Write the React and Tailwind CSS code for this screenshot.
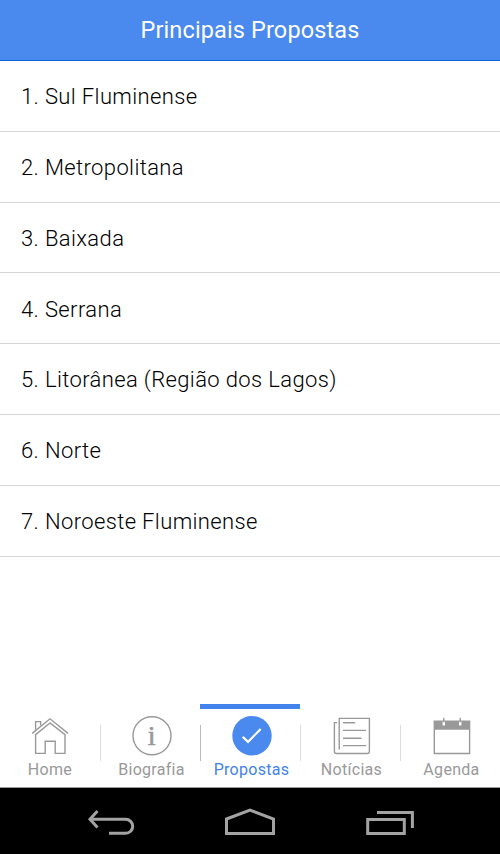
import React from 'react';
import clsx from 'clsx';

const REGIONS = [
    'Sul Fluminense',
    'Metropolitana',
    'Baixada',
    'Serrana',
    'Litorânea (Região dos Lagos)',
    'Norte',
    'Noroeste Fluminense',
];

const Icon = ({ children }) => (
    <svg width="40" height="40" viewBox="0 0 40 40" fill="none" stroke="currentColor" strokeWidth="1.4">
        {children}
    </svg>
);

const HomeIcon = () => (
    <Icon>
        <path d="M2.2 17.4 20 2.8l18 14.6" />
        <path d="M5.6 13.8V5.6h5v4" />
        <path d="M20 7 5.6 18.6v18.8h9.6V25.3h10v12.1h9.8V18.6z" />
    </Icon>
);

const InfoIcon = () => (
    <Icon>
        <circle cx="20" cy="19.7" r="19" />
        <text
            x="19.7"
            y="29"
            textAnchor="middle"
            fontSize="28"
            strokeWidth="0.6"
            fill="currentColor"
            className="font-['Liberation_Serif',serif]"
        >
            i
        </text>
    </Icon>
);

const CheckIcon = () => (
    <Icon>
        <circle cx="20" cy="19.7" r="19.7" fill="#4a89ee" stroke="none" />
        <path d="m10.7 20.7 5.3 5.2L28.7 13" stroke="#fff" strokeWidth="2.2" />
    </Icon>
);

const NewsIcon = () => (
    <Icon>
        <path d="M7.2 33.5V2.4h30.2v32.9q0 2.2-2.2 2.2H4.6q-2.2 0-2.2-2.2V6.6h2.9" />
        <path d="M11 6.8h12.2M11 14.4h23M11 22.2h18.5M11 29.6h23" />
    </Icon>
);

const AgendaIcon = () => (
    <Icon>
        <path d="M2.3 5.3h35.3v32.2H2.3z" />
        <path d="M2.5 5.5h35v8.3h-35z" fill="currentColor" stroke="none" />
        <path d="M11.8 5.6v4M28.2 5.6v4" stroke="#fff" strokeWidth="2.4" />
        <path d="M11.8 1.8v4.4M28.2 1.8v4.4" />
    </Icon>
);

const TABS = [
    { label: 'Home', icon: HomeIcon },
    { label: 'Biografia', icon: InfoIcon },
    { label: 'Propostas', icon: CheckIcon, active: true },
    { label: 'Notícias', icon: NewsIcon },
    { label: 'Agenda', icon: AgendaIcon },
];

const TabBar = () => (
    <nav className="flex h-[84px] border-b border-[#999]">
        {TABS.map(({ label, icon: TabIcon, active }, i) => (
            <div
                key={label}
                className={clsx(
                    'flex w-[100px] flex-col border-t-[5px]',
                    active ? 'border-[#4283ec] text-[#4283ec]' : 'border-transparent text-[#999]'
                )}
            >
                <div className="flex h-full">
                    {i > 0 && (
                        <div className={clsx('mt-4 h-9 w-px', active ? 'bg-[#bbb]' : 'bg-[#ddd]')} />
                    )}
                    <div className={clsx('flex flex-1 flex-col items-center pt-[7px]', i > 0 && 'pl-0.5')}>
                        <TabIcon />
                        <span className="mt-1 text-base leading-5 tracking-[0.3px]">{label}</span>
                    </div>
                </div>
            </div>
        ))}
    </nav>
);

const SystemBar = () => (
    <div className="flex h-[66px] items-center bg-black pl-[86px]">
        <svg width="50" height="32" viewBox="0 0 50 32" fill="none" stroke="#a3a3a3" strokeWidth="3">
            <path d="M3.5 14.3h36.2a7 7 0 0 1 0 14H23" />
            <path d="m11.5 6-7.5 8.3 7.5 8.2" />
        </svg>
        <svg className="ml-[87px]" width="54" height="32" viewBox="0 0 54 32" fill="none" stroke="#a3a3a3" strokeWidth="3">
            <path d="M3.5 14 27 5l23.5 9v14.5h-47z" />
        </svg>
        <svg className="ml-[87px]" width="54" height="32" viewBox="0 0 54 32" fill="none" stroke="#a3a3a3" strokeWidth="3">
            <path d="M3.7 14.4h36.6v14H3.7zM13 7.4h35.4v15.5" />
        </svg>
    </div>
);

const App = () => {
    return (
        <div className="flex h-[854px] w-[500px] flex-col overflow-hidden bg-white font-['Roboto',sans-serif]">
            <header className="flex h-[61px] items-center justify-center border-b border-[#0a62dc] bg-[#4a89ee] pt-px text-[23.5px] tracking-[0.13px] text-white">
                Principais Propostas
            </header>
            <ul className="flex-1">
                {REGIONS.map((name, i) => (
                    <li
                        key={name}
                        className="flex h-[70.8px] items-center border-b border-[#d6d6d6] pt-[1.5px] pl-[21px] text-[22px] font-light tracking-[0.37px] text-black"
                    >
                        {i + 1}. {name}
                    </li>
                ))}
            </ul>
            <TabBar />
            <SystemBar />
        </div>
    );
};

export default App;
